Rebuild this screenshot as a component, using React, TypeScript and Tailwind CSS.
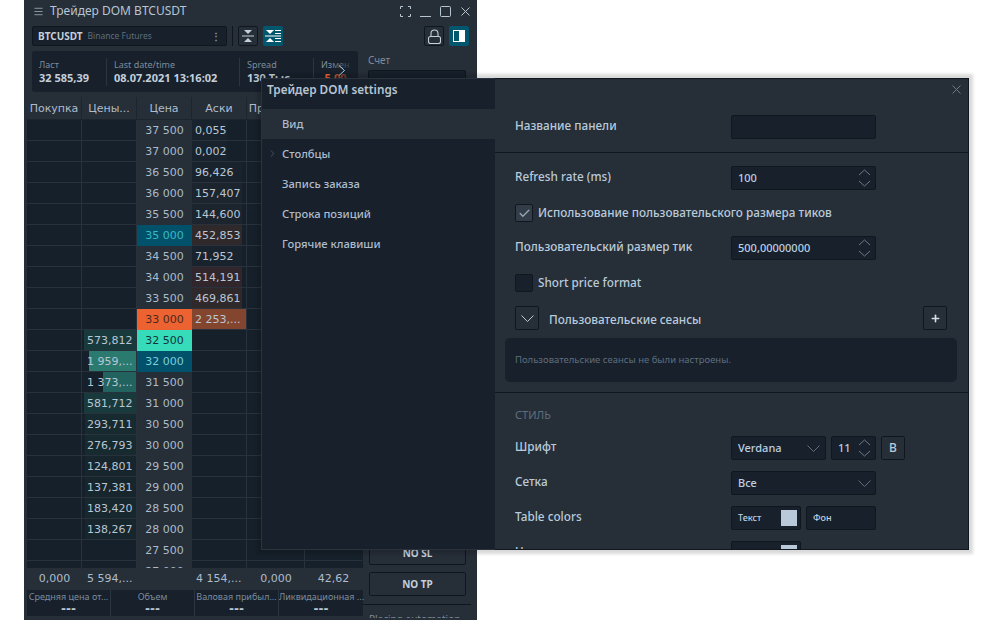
import { Check, ChevronRight, Menu, Plus } from 'lucide-react';

const UI = "font-['Noto_Sans',sans-serif]";
const MONO = "font-['DejaVu_Sans',sans-serif]";

type Row = {
  price: string;
  bid?: string;
  bidW?: number;
  bidBg?: string;
  ask?: string;
  askW?: number;
  askBg?: string;
  priceCls?: string;
};

const ROWS: Row[] = [
  { price: '37 500', ask: '0,055', askW: 35, askBg: '#18232e' },
  { price: '37 000', ask: '0,002', askW: 35, askBg: '#18232e' },
  { price: '36 500', ask: '96,426', askW: 50, askBg: '#19232d' },
  { price: '36 000', ask: '157,407', askW: 50, askBg: '#1c242d' },
  { price: '35 500', ask: '144,600', askW: 50, askBg: '#1c242d' },
  { price: '35 000', ask: '452,853', askW: 50, askBg: '#30292c', priceCls: 'bg-[#02516a] text-[#36b9c9]' },
  { price: '34 500', ask: '71,952', askW: 50, askBg: '#19232d' },
  { price: '34 000', ask: '514,191', askW: 50, askBg: '#30262b' },
  { price: '33 500', ask: '469,861', askW: 50, askBg: '#30292c' },
  { price: '33 000', ask: '2 253,...', askW: 55, askBg: '#84452f', priceCls: 'bg-[#ec6231] text-[#4a2a20]' },
  { price: '32 500', bid: '573,812', bidW: 52, bidBg: '#193a3d', priceCls: 'bg-[#36dcb9] text-[#12343a]' },
  { price: '32 000', bid: '1 959,...', bidW: 47, bidBg: '#2a7a70', priceCls: 'bg-[#02516a] text-[#7ad0dc]' },
  { price: '31 500', bid: '1 373,...', bidW: 33, bidBg: '#22625f' },
  { price: '31 000', bid: '581,712', bidW: 52, bidBg: '#193a3d' },
  { price: '30 500', bid: '293,711', bidW: 51, bidBg: '#172a30' },
  { price: '30 000', bid: '276,793', bidW: 51, bidBg: '#172a30' },
  { price: '29 500', bid: '124,801', bidW: 51, bidBg: '#17252c' },
  { price: '29 000', bid: '137,381', bidW: 51, bidBg: '#17252c' },
  { price: '28 500', bid: '183,420', bidW: 51, bidBg: '#17272e' },
  { price: '28 000', bid: '138,267', bidW: 51, bidBg: '#17252c' },
  { price: '27 500' },
  { price: '27 000' },
];

const cell = 'relative h-[21px] border-r border-b border-[#29323c] overflow-hidden';

function DomRow({ row }: { row: Row }) {
  return (
    <div className={`flex h-[21px] text-[11px] leading-[21px] text-[#b9c6d4] ${MONO}`}>
      <div className={`${cell} w-[55px] shrink-0`} />
      <div className={`${cell} w-[55px] shrink-0`}>
        {row.bid && (
          <>
            <div className="absolute right-0 top-0 bottom-0" style={{ width: row.bidW, background: row.bidBg }} />
            <span className="absolute left-[5px] top-0 whitespace-nowrap">{row.bid}</span>
          </>
        )}
      </div>
      <div className={`h-[21px] w-[55px] shrink-0 pb-px text-center ${row.priceCls ?? 'bg-[#262e38] text-[#a9bccd]'}`}>
        {row.price}
      </div>
      <div className={`${cell} w-[55px] shrink-0`}>
        {row.ask && (
          <>
            <div className="absolute left-0 top-0 bottom-0" style={{ width: row.askW, background: row.askBg }} />
            <span className="absolute left-[3px] top-0 whitespace-nowrap">{row.ask}</span>
          </>
        )}
      </div>
      <div className={`${cell} w-[58px] shrink-0`} />
      <div className={`${cell} w-[57px] shrink-0 border-r-0`} />
    </div>
  );
}

function Info({ label, value, w, border = true, valueCls = 'text-[#c3cfdb]' }: { label: string; value: string; w: string; border?: boolean; valueCls?: string }) {
  return (
    <div className={`${w} flex h-[28px] shrink-0 flex-col justify-center pl-[7px] ${border ? 'border-r border-[#2c3641]' : ''}`}>
      <div className="text-[9px] leading-[13px] text-[#7d8c9b]">{label}</div>
      <div className={`whitespace-nowrap text-[11px] font-bold leading-[14px] ${valueCls}`}>{value}</div>
    </div>
  );
}

function Spinner() {
  return (
    <svg width="13" height="18" viewBox="0 0 13 18" fill="none" stroke="#6b7a89">
      <path d="M1 6 6.500 1 12 6M1 12 6.500 17 12 12" />
    </svg>
  );
}

function Chevron({ color = '#5f6e7d' }: { color?: string }) {
  return (
    <svg width="13" height="7" viewBox="0 0 13 7" fill="none" stroke={color}>
      <path d="M.5 .5 6.500 6.500 12.500 .5" />
    </svg>
  );
}

function Field({ className = '', children }: { className?: string; children?: React.ReactNode }) {
  return (
    <div className={`flex h-[24px] items-center rounded-[2px] border border-[#0f161e] bg-[#17202b] text-[11px] font-medium text-[#bcd0e2] ${className}`}>
      {children}
    </div>
  );
}

const labelCls = 'text-[11.750px] font-medium text-[#b9cbdb]';

function SettingRow({ label, className = '', children }: { label: string; className?: string; children?: React.ReactNode }) {
  return (
    <div className={`flex h-[24px] items-center pl-[20px] ${className}`}>
      <div className={`w-[216px] shrink-0 -translate-y-[1px] ${labelCls}`}>{label}</div>
      <div className="flex gap-[5px]">{children}</div>
    </div>
  );
}

function ColorBox({ label, swatch, w }: { label: string; swatch?: boolean; w: string }) {
  return (
    <Field className={`${w} justify-between pl-[6px] pr-[3px]`}>
      <span className="text-[9px] font-medium">{label}</span>
      {swatch && <span className="h-[16px] w-[16px] bg-[#b9c9d9]" />}
    </Field>
  );
}

const NAV = ['Вид', 'Столбцы', 'Запись заказа', 'Строка позиций', 'Горячие клавиши'];

function DomWindow() {
  return (
    <div className={`absolute left-[24px] top-0 flex h-[620px] w-[453px] flex-col overflow-hidden bg-[#262e38] ${UI}`}>
      <div className="flex h-[22px] shrink-0 items-center pl-[9px] pr-[6px] text-[#b7c5d3]">
        <Menu size={11} strokeWidth={1.5} />
        <span className="ml-[6px] text-[12px]">Трейдер DOM BTCUSDT</span>
        <div className="ml-auto flex items-center gap-[9px]">
          <svg width="11" height="11" viewBox="0 0 11 11" fill="none" stroke="currentColor">
            <path d="M.5 3V.5H3M8 .5h2.500V3M10.500 8v2.500H8M3 10.500H.5V8" />
          </svg>
          <svg width="11" height="11" viewBox="0 0 11 11" fill="none" stroke="currentColor">
            <path d="M0 10.500h11" />
          </svg>
          <svg width="11" height="11" viewBox="0 0 11 11" fill="none" stroke="currentColor">
            <rect x=".5" y=".5" width="10" height="10" rx="1" />
          </svg>
          <svg width="11" height="11" viewBox="0 0 11 11" fill="none" stroke="currentColor">
            <path d="M1.500 1.500l8 8M9.500 1.500l-8 8" />
          </svg>
        </div>
      </div>

      <div className="mt-[4px] flex h-[20px] shrink-0 items-center pl-[8px] pr-[8px]">
        <div className="flex h-[20px] w-[195px] items-center rounded-[2px] border border-[#0f161e] bg-[#17202b] pl-[5px] pr-[5px]">
          <span className="text-[10px] font-bold text-[#c3cfdb]">BTCUSDT</span>
          <span className="ml-[5px] text-[8.500px] text-[#5f6e7d]">Binance Futures</span>
          <span className="ml-auto text-[10px] font-bold leading-none text-[#8896a5]">⋮</span>
        </div>
        <div className="ml-[5px] h-[20px] w-px bg-[#0f161e]" />
        <button className="ml-[5px] flex h-[20px] w-[20px] items-center justify-center rounded-[2px] border border-[#0f161e] text-[#c3cfdb]">
          <svg width="14" height="14" viewBox="0 0 14 14" fill="currentColor">
            <path d="M3 1h8L7 5zM3 13h8L7 9z" />
            <path d="M1 6.500h12v1H1z" />
          </svg>
        </button>
        <button className="ml-[5px] flex h-[20px] w-[20px] items-center justify-center rounded-[2px] bg-[#02566e] text-white">
          <svg width="16" height="14" viewBox="0 0 16 14" fill="currentColor">
            <path d="M1 1h8L5 5zM1 13h8L5 9z" />
            <path d="M0 6.500h16v1H0zM10 1h6v1h-6zM10 4h6v1h-6zM10 9h6v1h-6zM10 12h6v1h-6z" />
          </svg>
        </button>
        <button className="ml-auto flex h-[20px] w-[20px] items-center justify-center rounded-[2px] border border-[#0f161e] text-[#c3cfdb]">
          <svg width="13" height="15" viewBox="0 0 13 15" fill="none" stroke="currentColor" strokeWidth="1.100">
            <path d="M3 7V4.500a3.500 3.500 0 0 1 7 0V7" />
            <rect x=".5" y="7.500" width="12" height="7" rx="2" />
          </svg>
        </button>
        <button className="ml-[5px] flex h-[20px] w-[20px] items-center justify-center rounded-[2px] bg-[#02566e]">
          <span className="flex h-[12px] w-[12px] border border-white">
            <span className="h-full w-1/2 bg-[#02566e]" />
            <span className="h-full w-1/2 bg-white" />
          </span>
        </button>
      </div>

      <div className="flex min-h-0 flex-1">
        <div className="flex w-[339px] shrink-0 flex-col pl-[3px]">
          <div className="ml-[5px] mt-[5px] flex h-[41px] w-[326px] shrink-0 items-center overflow-hidden rounded-[3px] bg-[#17202b]">
            <Info label="Ласт" value="32 585,39" w="w-[75px]" />
            <Info label="Last date/time" value="08.07.2021 13:16:02" w="w-[133px]" />
            <Info label="Spread" value="130 Тыс" w="w-[74px]" />
            <div className="relative flex-1 overflow-hidden">
              <Info label="Измен" value="-5,00" w="w-[44px]" border={false} valueCls="text-[#ec6231]" />
              <div className="absolute inset-y-0 left-[16px] right-0 bg-gradient-to-r from-[#17202b00] to-[#17202b]" />
              <svg width="8" height="11" viewBox="0 0 8 11" fill="none" stroke="#a5d4f0" className="absolute left-[24px] top-[7px]">
                <path d="M1 .5 6.500 5.500 1 10.500" />
              </svg>
            </div>
          </div>

          <div className={`mt-[5px] flex h-[23px] shrink-0 text-[11px] leading-[23px] text-[#aebccb] ${MONO}`}>
            {['Покупка', 'Цены...', 'Цена', 'Аски', 'Продажи', ''].map((h, i) => (
              <div
                key={i}
                className={`h-[23px] shrink-0 overflow-hidden whitespace-nowrap border-r border-b border-[#1c242e] text-center ${i === 4 ? 'w-[58px]' : i === 5 ? 'w-[57px]' : 'w-[55px]'}`}
              >
                {h}
              </div>
            ))}
          </div>

          <div className="min-h-0 flex-1 overflow-hidden bg-[#16202a]">
            {ROWS.map((row) => (
              <DomRow key={row.price} row={row} />
            ))}
          </div>

          <div className={`flex h-[22px] shrink-0 items-center pt-px text-[11px] text-[#aebccb] ${MONO}`}>
            <div className="w-[55px] text-center">0,000</div>
            <div className="w-[55px] pl-[5px]">5 594,...</div>
            <div className="w-[55px]" />
            <div className="w-[55px] pl-[4px]">4 154,...</div>
            <div className="w-[58px] text-center">0,000</div>
            <div className="w-[57px] text-center">42,62</div>
          </div>

          <div className="flex h-[26px] shrink-0 bg-[#17202b] text-center">
            {['Средняя цена от...', 'Объем', 'Валовая прибыл...', 'Ликвидационная ...'].map((s, i) => (
              <div key={s} className={`w-[84px] shrink-0 ${i < 3 ? 'border-r border-[#2c3641]' : ''}`}>
                <div className="mt-[1px] whitespace-nowrap text-[9px] leading-[12px] text-[#7d8c9b]">{s}</div>
                <div className={`mt-[1px] text-[12px] font-bold leading-[10px] text-[#b7c5d3] ${MONO}`}>---</div>
              </div>
            ))}
          </div>
          <div className="h-[4px] shrink-0" />
        </div>

        <div className="relative ml-[5px] flex w-[103px] flex-col pt-[7px]">
          <div className="text-[10px] leading-[14px] text-[#7d8c9b]">Счет</div>
          <div className="mt-[3px] h-[24px] w-[98px] rounded-[2px] border border-[#0f161e] bg-[#17202b]" />
          <div className="mt-auto flex flex-col">
            <button className="ml-[1px] flex h-[24px] w-[97px] items-center justify-center rounded-[2px] border border-[#0f161e] text-[10px] font-bold text-[#c3cfdb]">
              NO SL
            </button>
            <button className="ml-[1px] mt-[7px] flex h-[24px] w-[97px] items-center justify-center rounded-[2px] border border-[#0f161e] text-[10px] font-bold text-[#c3cfdb]">
              NO TP
            </button>
            <div className="-ml-[5px] mt-[8px] h-[14px] w-[108px] overflow-hidden border-t border-[#0f161e] pl-[6px] pt-[7px] text-[10px] leading-[14px] text-[#7d8c9b]">
              Placing automation
            </div>
            <div className="h-[2px]" />
          </div>
        </div>
      </div>
    </div>
  );
}

function SettingsWindow() {
  return (
    <div className={`absolute left-[261px] top-[78px] flex h-[472px] w-[708px] shadow-[0_0_3px_4px_rgba(0,0,0,0.15)] ${UI}`}>
      <div className="relative z-10 flex w-[234px] shrink-0 flex-col border border-r-0 border-[#2a333d] bg-[#17202b]">
        <div className="h-[30px] pl-[5px] text-[11.750px] font-semibold leading-[20px] text-[#b7c5d3]">Трейдер DOM settings</div>
        {NAV.map((n, i) => (
          <div
            key={n}
            className={`relative flex h-[30px] items-center pl-[20px] text-[11.200px] font-medium text-[#aebccb] ${i === 0 ? 'bg-[#262e38]' : ''}`}
          >
            {i === 1 && <ChevronRight size={11} strokeWidth={1} className="absolute left-[5px] top-[9px] text-[#7d8c9b]" />}
            {n}
          </div>
        ))}
      </div>

      <div className="relative flex-1 border-y border-r border-[#10171f] bg-[#262e38]">
        <svg width="9" height="9" viewBox="0 0 9 9" fill="none" stroke="#6b7a89" className="absolute right-[7px] top-[6px]">
          <path d="M.5 .5l8 8M8.500 .5l-8 8" />
        </svg>

        <div className="h-[470px] overflow-hidden">
          <SettingRow label="Название панели" className="mt-[36px]">
            <Field className="w-[145px]" />
          </SettingRow>
          <div className="mt-[13px] h-px bg-[#10171f]" />

          <SettingRow label="Refresh rate (ms)" className="mt-[13px]">
            <Field className="w-[145px] justify-between pl-[6px] pr-[4px]">
              100
              <Spinner />
            </Field>
          </SettingRow>

          <div className="mt-[14px] flex h-[18px] items-center pl-[20px]">
            <span className="flex h-[18px] w-[18px] items-center justify-center rounded-[2px] border border-[#0f161e] bg-[#333d49] text-[#98a5b2]">
              <Check size={13} strokeWidth={2.500} />
            </span>
            <span className={`ml-[5px] ${labelCls}`}>Использование пользовательского размера тиков</span>
          </div>

          <SettingRow label="Пользовательский размер тик" className="mt-[14px]">
            <Field className="w-[145px] justify-between pl-[6px] pr-[4px]">
              500,00000000
              <Spinner />
            </Field>
          </SettingRow>

          <div className="mt-[14px] flex h-[18px] items-center pl-[20px]">
            <span className="h-[18px] w-[18px] rounded-[2px] border border-[#0f161e] bg-[#17202b]" />
            <span className={`ml-[5px] ${labelCls}`}>Short price format</span>
          </div>

          <div className="mt-[14px] flex h-[24px] items-center pl-[20px] pr-[21px]">
            <span className="flex h-[24px] w-[24px] items-center justify-center rounded-[2px] border border-[#0f161e]">
              <Chevron color="#b9cbdb" />
            </span>
            <span className={`ml-[10px] translate-y-[2px] ${labelCls}`}>Пользовательские сеансы</span>
            <span className="ml-auto flex h-[24px] w-[24px] items-center justify-center rounded-[2px] border border-[#0f161e] text-[#d5dee7]">
              <Plus size={11} strokeWidth={3.500} />
            </span>
          </div>

          <div className="ml-[10px] mr-[11px] mt-[8px] flex h-[44px] items-center rounded-[5px] bg-[#17202b] pl-[10px] text-[9.500px] text-[#5f6e7d]">
            Пользовательские сеансы не были настроены.
          </div>
          <div className="mt-[10px] h-px bg-[#10171f]" />

          <div className="mt-[14px] pl-[20px] text-[11px] leading-[16px] text-[#5f6e7d]">СТИЛЬ</div>

          <SettingRow label="Шрифт" className="mt-[13px]">
            <Field className="w-[95px] justify-between pl-[6px] pr-[5px]">
              Verdana
              <Chevron />
            </Field>
            <Field className="w-[45px] justify-between pl-[6px] pr-[4px]">
              11
              <Spinner />
            </Field>
            <span className="flex h-[24px] w-[24px] items-center justify-center rounded-[2px] border border-[#0f161e] text-[12px] font-medium text-[#b9cbdb]">
              B
            </span>
          </SettingRow>

          <SettingRow label="Сетка" className="mt-[11px]">
            <Field className="w-[145px] justify-between border-[#0b1118] pl-[6px] pr-[4px]">
              Все
              <Chevron />
            </Field>
          </SettingRow>

          <SettingRow label="Table colors" className="mt-[11px]">
            <ColorBox label="Текст" swatch w="w-[70px]" />
            <ColorBox label="Фон" w="w-[70px]" />
          </SettingRow>

          <SettingRow label="Цвет" className="mt-[11px]">
            <ColorBox label="Текст" swatch w="w-[70px]" />
          </SettingRow>
        </div>
      </div>
    </div>
  );
}

export default function App() {
  return (
    <div className="relative h-[624px] w-[987px] overflow-hidden bg-white">
      <DomWindow />
      <SettingsWindow />
    </div>
  );
}
